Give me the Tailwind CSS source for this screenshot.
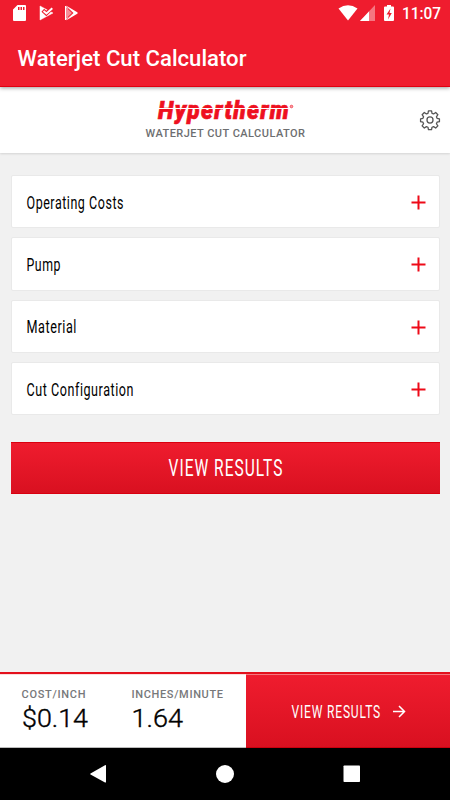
<!DOCTYPE html>
<html lang="en">
<head>
    <meta charset="UTF-8">
    <meta name="viewport" content="width=device-width, initial-scale=1.0">
    <title>Waterjet Cut Calculator</title>
    <script src="https://cdn.jsdelivr.net/npm/@tailwindcss/browser@4"></script>
</head>
<body class="w-[450px] h-[800px] overflow-hidden flex flex-col bg-[#f1f1f1] font-['Roboto',sans-serif] text-black">

    <!-- status bar + title -->
    <div class="h-[87px] shrink-0 bg-[#ef1c2e] border-b border-[#e00010] text-white relative z-10 shadow-[0_1px_4px_rgba(0,0,0,0.4)]">
        <div class="h-7 flex justify-between">
            <svg class="w-24 h-7" viewBox="0 0 96 28" fill="white">
                <path fill-rule="evenodd" d="M17.500 5H25a1 1 0 0 1 1 1V20a1 1 0 0 1-1 1H14a1 1 0 0 1-1-1V9.500zM18 7v3h1.500V7zM20.500 7v3H22V7zM23 7v3h1.500V7z"/>
                <path d="M40 6V20L53 13z" stroke="white" stroke-width=".5"/>
                <path d="M42.800 10.300 46.300 13.500 52.500 7.500" fill="none" stroke="#ef1c2e" stroke-width="4"/>
                <path d="M43.500 11 46.500 13.500 52.300 8.300" fill="none" stroke="white" stroke-width="2"/>
                <path d="M65.500 6V20L72 13z" fill-opacity=".5" stroke="white"/>
                <path d="M66 5.500 76 11.500Q79.500 13 76 14.500L66 20.500 73.500 13z"/>
                <path d="M67.500 8.500 72 13 67.500 17.500" fill="none" stroke="#ef1c2e" stroke-width=".8"/>
            </svg>
            <svg class="w-[130px] h-7" viewBox="320 0 130 28" fill="white">
                <path d="M338.500 8.500Q348 2 357.500 8.500L348 20.500z"/>
                <path d="M375 5V21H360z" fill-opacity=".4"/>
                <path d="M369 11.500V21H360z"/>
                <path fill-rule="evenodd" d="M387 5h4v1.500h2a1 1 0 0 1 1 1V20a1 1 0 0 1-1 1h-8a1 1 0 0 1-1-1V7.500a1 1 0 0 1 1-1h2zM390.500 8.500 386.500 14.500h2.500L388 19.500 391.800 13h-2.300z"/>
                <text x="402" y="19" font-size="16.500" font-weight="500" textLength="39" lengthAdjust="spacingAndGlyphs">11:07</text>
            </svg>
        </div>
        <svg class="w-[300px] h-14" viewBox="0 28 300 56" fill="white">
            <text x="17.500" y="65.500" font-size="22.500" font-weight="500" textLength="229" lengthAdjust="spacingAndGlyphs">Waterjet Cut Calculator</text>
        </svg>
    </div>

    <!-- logo header -->
    <header class="h-[66px] shrink-0 bg-white flex justify-center relative shadow-[0_1px_2px_rgba(0,0,0,0.12)]">
        <svg class="w-[190px] h-[66px]" viewBox="130 87 190 66">
            <text x="158" y="118.500" font-size="25.500" font-weight="900" font-style="italic" letter-spacing="1.500" fill="#ee1020" stroke="#ee1020" stroke-width=".7" textLength="132" lengthAdjust="spacingAndGlyphs">Hypertherm</text>
            <path d="M156 108.500H290" stroke="white" stroke-width="1"/>
            <circle cx="291.500" cy="106.500" r="1.300" fill="#ee1020" fill-opacity=".4" stroke="#ee1020" stroke-width=".6"/>
            <text x="145.500" y="136.500" font-size="11" font-weight="500" fill="#6d6e70" textLength="159.500" lengthAdjust="spacing">WATERJET CUT CALCULATOR</text>
        </svg>
        <svg class="absolute right-[9px] top-[22px] w-[22px] h-[22px]" viewBox="0 0 24 24" fill="none" stroke="#555" stroke-width="1.400" stroke-linejoin="round">
            <circle cx="12" cy="12" r="3.300"/>
            <path d="M10.300 2h3.400l.5 2.700 1.700.7 2.300-1.600 2.400 2.400L19 8.500l.7 1.700 2.600.5v3.200l-2.600.5-.7 1.700 1.600 2.300-2.400 2.400-2.300-1.600-1.700.7-.5 2.600h-3.400l-.5-2.600-1.700-.7-2.300 1.600-2.400-2.400L5 16.100l-.7-1.700-2.600-.5v-3.200l2.600-.5L5 8.500 3.400 6.200l2.400-2.400 2.300 1.600 1.700-.7z"/>
        </svg>
    </header>

    <main class="flex-1 pl-[11px] pr-[10px] pt-[22px]">
        <div class="flex flex-col gap-[9px]">
            <div class="h-[53.300px] bg-white border border-[#e9e9e9] rounded-xs flex items-center justify-between pl-[14px] pr-[13px]">
                <svg class="w-[200px] h-8" viewBox="0 0 200 32"><text x=".5" y="22.500" font-size="18" letter-spacing=".8" textLength="97.500" lengthAdjust="spacingAndGlyphs">Operating Costs</text></svg>
                <svg class="w-[15px] h-[15px] mt-[2px]" viewBox="0 0 15 15" stroke="#ee0a18" stroke-width="2"><path d="M7.500 .5v14M.5 7.500h14"/></svg>
            </div>
            <div class="h-[53.300px] bg-white border border-[#e9e9e9] rounded-xs flex items-center justify-between pl-[14px] pr-[13px]">
                <svg class="w-[200px] h-8" viewBox="0 0 200 32"><text x=".5" y="22.500" font-size="18" letter-spacing=".8" textLength="34.500" lengthAdjust="spacingAndGlyphs">Pump</text></svg>
                <svg class="w-[15px] h-[15px] mt-[2px]" viewBox="0 0 15 15" stroke="#ee0a18" stroke-width="2"><path d="M7.500 .5v14M.5 7.500h14"/></svg>
            </div>
            <div class="h-[53.300px] bg-white border border-[#e9e9e9] rounded-xs flex items-center justify-between pl-[14px] pr-[13px]">
                <svg class="w-[200px] h-8" viewBox="0 0 200 32"><text x=".5" y="22.500" font-size="18" letter-spacing=".8" textLength="50.500" lengthAdjust="spacingAndGlyphs">Material</text></svg>
                <svg class="w-[15px] h-[15px] mt-[2px]" viewBox="0 0 15 15" stroke="#ee0a18" stroke-width="2"><path d="M7.500 .5v14M.5 7.500h14"/></svg>
            </div>
            <div class="h-[53.300px] bg-white border border-[#e9e9e9] rounded-xs flex items-center justify-between pl-[14px] pr-[13px]">
                <svg class="w-[200px] h-8" viewBox="0 0 200 32"><text x=".5" y="22.500" font-size="18" letter-spacing=".8" textLength="107.500" lengthAdjust="spacingAndGlyphs">Cut Configuration</text></svg>
                <svg class="w-[15px] h-[15px] mt-[2px]" viewBox="0 0 15 15" stroke="#ee0a18" stroke-width="2"><path d="M7.500 .5v14M.5 7.500h14"/></svg>
            </div>
        </div>

        <button class="mt-[27px] w-full h-[52px] flex items-center justify-center bg-linear-to-b from-[#ef1c2e] to-[#d91020] border-y border-[#d9000f]">
            <svg class="w-[200px] h-8" viewBox="0 0 200 32" fill="white"><text x="42.500" y="24" font-size="23" letter-spacing="1.500" textLength="115" lengthAdjust="spacingAndGlyphs">VIEW RESULTS</text></svg>
        </button>
    </main>

    <!-- results footer -->
    <footer class="h-[76px] shrink-0 bg-white border-t-2 border-[#e3101c] flex">
        <div class="w-[245.500px] border-t border-[#fbdede] border-b border-b-[#bbb]">
            <svg class="w-[245px] h-[72px]" viewBox="0 675 245 72">
                <g font-size="11" font-weight="500" fill="#77787a">
                    <text x="21.500" y="697.500" textLength="64" lengthAdjust="spacing">COST/INCH</text>
                    <text x="131.500" y="697.500" textLength="91.500" lengthAdjust="spacing">INCHES/MINUTE</text>
                </g>
                <g font-size="26.500" font-weight="300" stroke="black" stroke-width=".4">
                    <text x="22" y="727" textLength="66" lengthAdjust="spacingAndGlyphs">$0.14</text>
                    <text x="131.500" y="727" textLength="51.500" lengthAdjust="spacingAndGlyphs">1.64</text>
                </g>
            </svg>
        </div>
        <div class="flex-1 bg-linear-to-b from-[#ef1c2e] to-[#d91020] border-t border-t-[#f4777f] border-b border-b-[#c8000f]">
            <svg class="w-[204px] h-[72px]" viewBox="246 675 204 72" fill="white">
                <text x="291.500" y="717.700" font-size="17.500" letter-spacing="1.200" textLength="89.500" lengthAdjust="spacingAndGlyphs">VIEW RESULTS</text>
                <path d="M393 711.500h11.500M399 706l5.500 5.500-5.500 5.500" fill="none" stroke="white" stroke-width="1.500"/>
            </svg>
        </div>
    </footer>

    <!-- android nav -->
    <nav class="h-[52px] shrink-0 bg-black">
        <svg class="w-[450px] h-[52px]" viewBox="0 748 450 52" fill="white">
            <path d="M90.500 773.500 105 765.200Q106 764.700 106 765.700V781.700Q106 783 105 782.400L90.500 774.500Q89.800 774 90.500 773.500z"/>
            <circle cx="225" cy="774" r="9"/>
            <rect x="343.500" y="765.500" width="16.500" height="16.500" rx=".8"/>
        </svg>
    </nav>
</body>
</html>
